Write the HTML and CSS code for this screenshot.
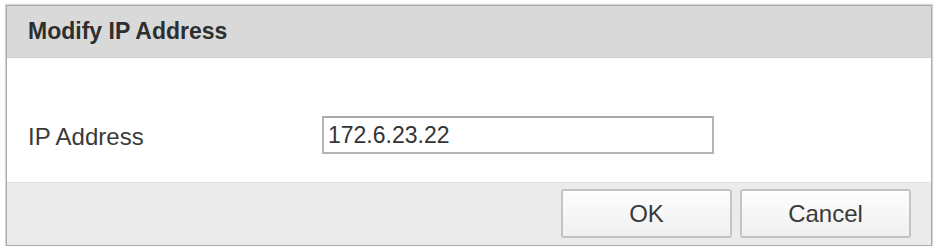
FILE: index.html
```html
<!DOCTYPE html>
<html>
<head>
<meta charset="utf-8">
<link rel="stylesheet" href="styles.css">
</head>
<body>
<div class="dialog">
  <div class="header">Modify IP Address</div>
  <div class="body">
    <div class="row">
      <label class="label">IP Address</label>
      <div class="input">172.6.23.22</div>
    </div>
  </div>
  <div class="footer">
    <button class="btn">OK</button>
    <button class="btn">Cancel</button>
  </div>
</div>
</body>
</html>
```

FILE: styles.css
```css
html, body {
  margin: 0;
  padding: 0;
  background: #ffffff;
}
body {
  padding: 5px 0 0 6px;
  font-family: "Liberation Sans", Arial, sans-serif;
  color: #333333;
}
.dialog {
  width: 924px;
  height: 239px;
  border: 1px solid #a9a9a9;
  box-shadow: 0 0 1px 1px #d8d8d8;
  display: flex;
  flex-direction: column;
  background: #ffffff;
}
.header {
  height: 52px;
  background: #d9d9d9;
  border-bottom: 1px solid #d0d0d0;
  box-sizing: border-box;
  padding-left: 21px;
  display: flex;
  align-items: center;
  font-weight: bold;
  font-size: 23px;
  color: #2e2e2e;
}
.body {
  height: 124px;
  box-sizing: border-box;
  padding: 58px 0 0 21px;
}
.row {
  display: flex;
  align-items: center;
  height: 38px;
}
.label {
  width: 294px;
  font-size: 24px;
  color: #3a3a3a;
  padding-top: 3px;
}
.input {
  width: 392px;
  height: 38px;
  box-sizing: border-box;
  border: 2px solid #b4b4b4;
  border-top-color: #a8a8a8;
  padding-left: 4px;
  display: flex;
  align-items: center;
  font-size: 23px;
  color: #333333;
}
.footer {
  flex: 1;
  background: #ebebeb;
  border-top: 1px solid #e2e2e2;
  display: flex;
  justify-content: flex-end;
  align-items: flex-start;
  gap: 8px;
  padding: 6px 20px 0 0;
}
.btn {
  width: 171px;
  height: 49px;
  border: 2px solid #c4c4c4;
  border-radius: 3px;
  background: linear-gradient(#fdfdfd, #f0f0f0);
  font-family: "Liberation Sans", Arial, sans-serif;
  font-size: 24px;
  color: #3a3a3a;
  padding: 0;
}
```
